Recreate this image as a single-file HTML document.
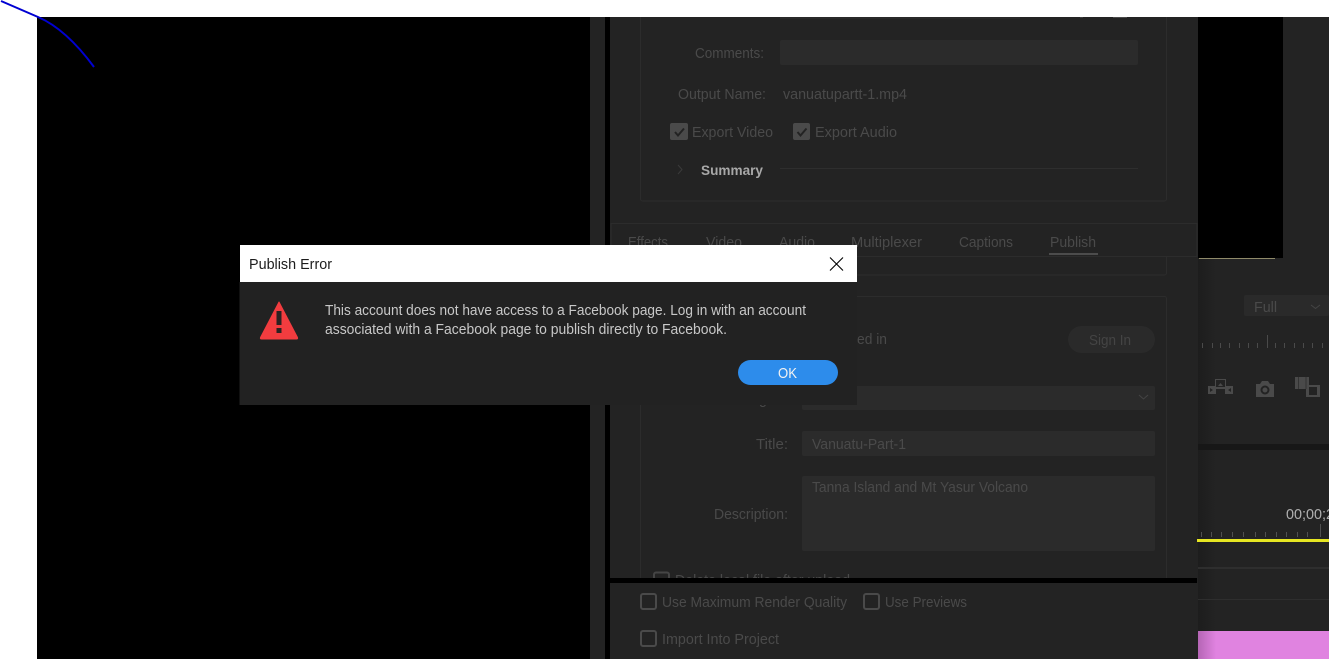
<!DOCTYPE html>
<html><head><meta charset="utf-8"><title>Publish Error</title>
<style>
html,body{margin:0;padding:0;background:#fff;width:1329px;height:659px;overflow:hidden}
svg{display:block;position:absolute;left:0;top:0}
text{font-family:"Liberation Sans",sans-serif;font-size:15px;fill:#4a4a4a}
</style></head><body>
<svg width="1329" height="659" viewBox="0 0 1329 659" xmlns="http://www.w3.org/2000/svg">
<defs>
<linearGradient id="sh" x1="0" x2="1" y1="0" y2="0"><stop offset="0" stop-color="#1d1d1d"/><stop offset="1" stop-color="#232323"/></linearGradient>
<linearGradient id="pk" x1="0" x2="1" y1="0" y2="0"><stop offset="0" stop-color="#b565b5"/><stop offset="1" stop-color="#e083e0"/></linearGradient>
<clipPath id="clipTop"><rect x="610" y="17" width="600" height="561"/></clipPath>
</defs>
<rect width="1329" height="659" fill="#fff"/>
<rect x="37" y="17" width="553" height="642" fill="#000"/>
<rect x="590" y="17" width="15" height="642" fill="#232323"/>
<rect x="605" y="17" width="5" height="642" fill="#000"/>
<rect x="610" y="17" width="588" height="642" fill="#232323"/>
<rect x="1198" y="17" width="131" height="642" fill="#232323"/>
<rect x="1198" y="17" width="85" height="241" fill="#000"/>
<rect x="1199" y="258" width="76" height="1" fill="#8f8a6a"/>
<rect x="1198" y="259" width="18" height="400" fill="url(#sh)"/>

<g clip-path="url(#clipTop)">
<rect x="640.500" y="-40" width="526" height="241" rx="2" fill="none" stroke="#2c2c2c"/>
<rect x="640.500" y="235" width="526" height="40" rx="2" fill="none" stroke="#2c2c2c"/>
<rect x="640.500" y="296.500" width="526" height="340" rx="2" fill="none" stroke="#2c2c2c"/>
<rect x="780" y="10" width="240" height="9" fill="#292929"/>
<rect x="1113" y="14" width="14" height="4" fill="#4a4a4a"/>
<rect x="1080" y="15" width="3" height="3" fill="#3c3c3c"/>
<text x="695" y="58" textLength="69" lengthAdjust="spacingAndGlyphs">Comments:</text>
<rect x="780" y="40" width="358" height="25" rx="2" fill="#2b2b2b"/>
<text x="678" y="99" textLength="88" lengthAdjust="spacingAndGlyphs">Output Name:</text>
<text x="783" y="99" textLength="124" lengthAdjust="spacingAndGlyphs">vanuatupartt-1.mp4</text>
<rect x="670" y="123" width="18" height="17" rx="2" fill="#4a4a4a"/>
<path d="M675 132l3 3.500 6-7" fill="none" stroke="#232323" stroke-width="2"/>
<text x="692" y="137" textLength="81" lengthAdjust="spacingAndGlyphs">Export Video</text>
<rect x="793" y="123" width="17" height="17" rx="2" fill="#4a4a4a"/>
<path d="M797.500 132l3 3.500 6-7" fill="none" stroke="#232323" stroke-width="2"/>
<text x="815" y="137" textLength="82" lengthAdjust="spacingAndGlyphs">Export Audio</text>
<path d="M678 165l4 4.500-4 4.500" fill="none" stroke="#3a3a3a"/>
<text x="701" y="175" textLength="62" lengthAdjust="spacingAndGlyphs" style="font-weight:bold;font-size:14px;fill:#a8a8a8">Summary</text>
<rect x="780" y="168" width="358" height="1" fill="#2e2e2e"/>

<rect x="611" y="223.500" width="586" height="33" fill="#232323" stroke="#2c2c2c"/>
<text x="628" y="247" textLength="40" lengthAdjust="spacingAndGlyphs">Effects</text>
<text x="706" y="247" textLength="36" lengthAdjust="spacingAndGlyphs">Video</text>
<text x="779" y="247" textLength="36" lengthAdjust="spacingAndGlyphs">Audio</text>
<text x="851" y="247" textLength="71" lengthAdjust="spacingAndGlyphs">Multiplexer</text>
<text x="959" y="247" textLength="54" lengthAdjust="spacingAndGlyphs">Captions</text>
<text x="1050" y="247" textLength="46" lengthAdjust="spacingAndGlyphs">Publish</text>
<rect x="1049" y="253" width="49" height="2" fill="#4c4c4c"/>

<text x="857" y="344" textLength="30" lengthAdjust="spacingAndGlyphs">ed in</text>
<rect x="1068" y="326" width="87" height="27" rx="13.500" fill="#2a2a2a"/>
<text x="1089" y="345" textLength="42" lengthAdjust="spacingAndGlyphs" style="fill:#444">Sign In</text>
<rect x="802" y="386" width="353" height="24" rx="2" fill="#2b2b2b"/>
<path d="M1139 395l4.500 4 4.500-4" fill="none" stroke="#444"/>
<text x="759" y="404" textLength="8" lengthAdjust="spacingAndGlyphs">g</text>
<text x="756" y="449" textLength="32" lengthAdjust="spacingAndGlyphs">Title:</text>
<rect x="802" y="431" width="353" height="25" rx="2" fill="#2b2b2b"/>
<text x="812" y="449" textLength="94" lengthAdjust="spacingAndGlyphs">Vanuatu-Part-1</text>
<text x="714" y="519" textLength="74" lengthAdjust="spacingAndGlyphs">Description:</text>
<rect x="802" y="476" width="353" height="75" rx="2" fill="#2b2b2b"/>
<text x="812" y="492" textLength="216" lengthAdjust="spacingAndGlyphs">Tanna Island and Mt Yasur Volcano</text>
<rect x="654" y="572.500" width="15" height="15" rx="2" fill="none" stroke="#454545" stroke-width="2"/>
<text x="675" y="585" textLength="175" lengthAdjust="spacingAndGlyphs">Delete local file after upload</text>
</g>

<rect x="610" y="578" width="587" height="5" fill="#000"/>
<rect x="641" y="594" width="15" height="15" rx="2" fill="none" stroke="#4a4a4a" stroke-width="2"/>
<text x="662" y="607" textLength="185" lengthAdjust="spacingAndGlyphs">Use Maximum Render Quality</text>
<rect x="864" y="594" width="15" height="15" rx="2" fill="none" stroke="#4a4a4a" stroke-width="2"/>
<text x="885" y="607" textLength="82" lengthAdjust="spacingAndGlyphs">Use Previews</text>
<rect x="641" y="631" width="15" height="15" rx="2" fill="none" stroke="#4a4a4a" stroke-width="2"/>
<text x="662" y="644" textLength="117" lengthAdjust="spacingAndGlyphs">Import Into Project</text>

<rect x="1244" y="295" width="85" height="21" rx="2" fill="#2a2a2a"/>
<text x="1254" y="312" textLength="23" lengthAdjust="spacingAndGlyphs">Full</text>
<path d="M1311 305l4.500 3.500 4.500-3.500" fill="none" stroke="#444"/>
<path d="M1202.500 343v5M1212.500 343v5M1220.500 343v5M1229.500 343v5M1239.500 343v5M1248.500 343v5M1257.500 343v5M1267.500 335v13M1275.500 343v5M1284.500 343v5M1294.500 343v5M1303.500 343v5M1312.500 343v5M1322.500 343v5" stroke="#4a4a4a" fill="none"/>

<g fill="#4a4a4a">
<rect x="1215.500" y="379.500" width="10" height="8" fill="none" stroke="#4a4a4a"/>
<path d="M1218 386l2.500-3 2.500 3z"/>
<path d="M1208 386h8v8h-8zM1225 386h8v8h-8zM1216 387h9v2h-9z"/>
<path d="M1256 384h4l2-3h6l2 3h4v13h-18z"/>
<rect x="1295" y="377" width="14" height="12"/>
<rect x="1306" y="385" width="14" height="12"/>
</g>
<path d="M1210 388l3 2-3 2zM1231 388l-3 2 3 2z" fill="#232323"/>
<circle cx="1265" cy="390" r="3.500" fill="none" stroke="#232323" stroke-width="2"/>
<rect x="1309" y="387" width="8" height="8" fill="#232323"/>
<path d="M1298.500 377v12M1306 377v12" stroke="#333" fill="none"/>

<rect x="1198" y="444" width="131" height="6" fill="#171717"/>
<text x="1286" y="519" textLength="48" lengthAdjust="spacingAndGlyphs" style="fill:#b0b0b0">00;00;2</text>
<path d="M1201.500 532v5M1211.500 532v5M1221.500 532v5M1232.500 532v5M1243.500 532v5M1255.500 532v5M1265.500 532v5M1276.500 532v5M1286.500 532v5M1297.500 532v5M1307.500 532v5M1320.500 524v13" stroke="#505050" fill="none"/>
<rect x="1197" y="539" width="132" height="3" fill="#e6e622"/>
<rect x="1198" y="567" width="131" height="2" fill="#2e2e2e"/>
<rect x="1198" y="599" width="131" height="1" fill="#2e2e2e"/>
<rect x="1198" y="631" width="18" height="28" fill="url(#pk)"/>
<rect x="1216" y="631" width="113" height="28" fill="#e083e0"/>

<path d="M1 1L38 17Q66 29 94 67" fill="none" stroke="#0000d2" stroke-width="2"/>

<rect x="239.500" y="282" width="617.500" height="123" fill="#222"/>
<rect x="240" y="245" width="617" height="37" fill="#fff"/>
<text x="249" y="269" textLength="83" lengthAdjust="spacingAndGlyphs" style="fill:#1c1c1c">Publish Error</text>
<path d="M830 257.500L843 270.500M843 257.500L830 270.500" stroke="#000" stroke-width="1.100" fill="none"/>
<path d="M279 302L297.500 337.500Q298 339 296.500 339H261.500Q260 339 260.500 337.500Z" fill="#f23c3f" stroke="#f23c3f" stroke-linejoin="round"/>
<rect x="276.500" y="311" width="5" height="14" fill="#2a2222"/>
<rect x="276.500" y="328" width="5" height="5" fill="#2a2222"/>
<text x="325" y="315" textLength="481" lengthAdjust="spacingAndGlyphs" style="fill:#c8c8c8">This account does not have access to a Facebook page. Log in with an account</text>
<text x="325" y="334" textLength="402" lengthAdjust="spacingAndGlyphs" style="fill:#c8c8c8">associated with a Facebook page to publish directly to Facebook.</text>
<rect x="738" y="360" width="100" height="25" rx="12.500" fill="#2d8ceb"/>
<text x="778" y="378" textLength="19" lengthAdjust="spacingAndGlyphs" style="fill:#f2f2f2">OK</text>
</svg>
</body></html>
